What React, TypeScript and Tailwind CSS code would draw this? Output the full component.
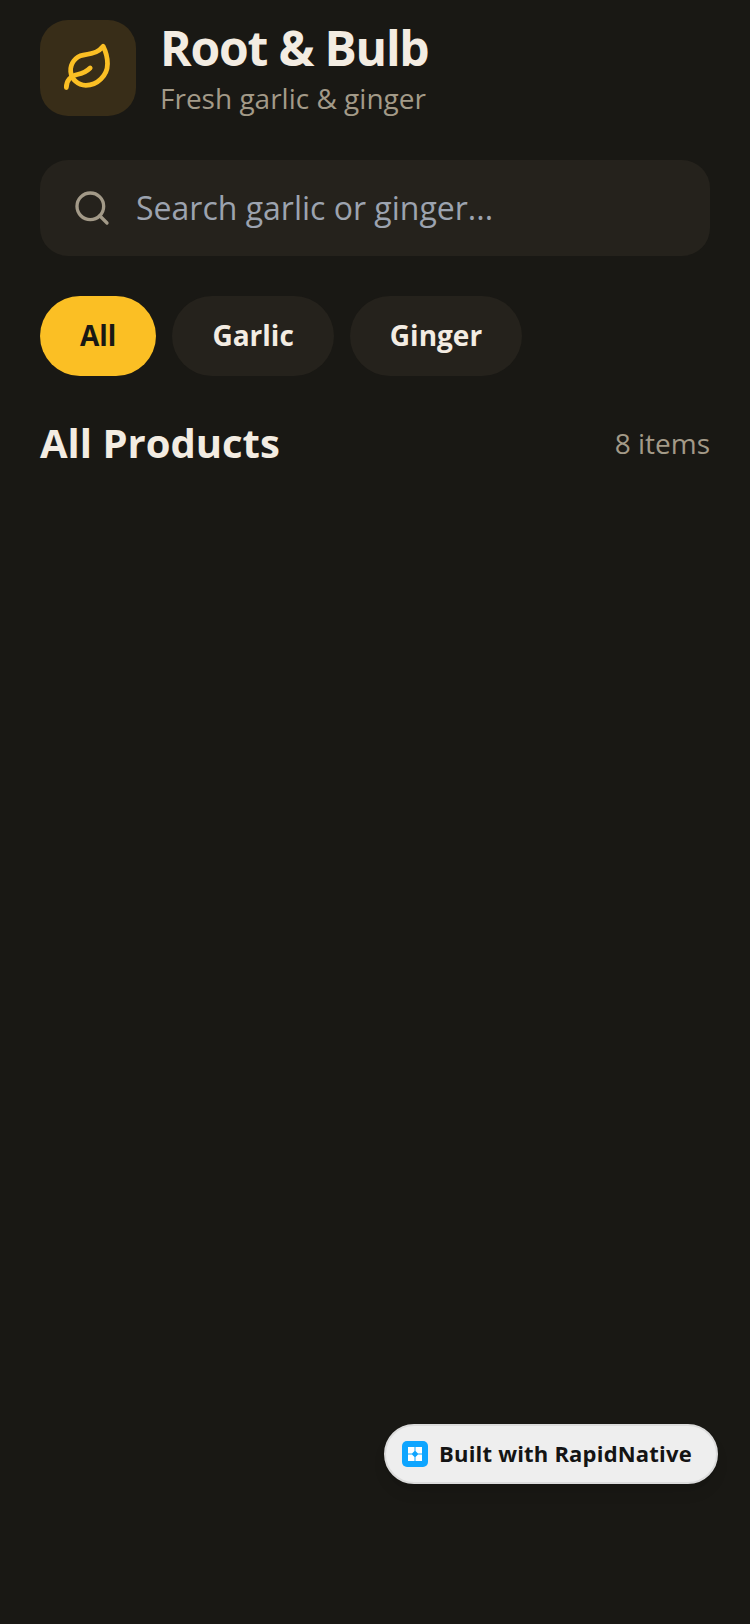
import { Leaf, Search } from "lucide-react";

const tabs = ["All", "Garlic", "Ginger"];

export default function App() {
  return (
    <div className="relative h-[1624px] w-[750px] overflow-hidden bg-[#191814] px-10 pt-5 font-['Open_Sans',sans-serif]">
      <header className="flex h-24 items-center gap-6">
        <div className="flex h-24 w-24 items-center justify-center rounded-[28px] bg-[#382d18]">
          <Leaf size={52} strokeWidth={2.2} className="text-[#fbbf24]" />
        </div>
        <div className="flex flex-col">
          <h1 className="text-[48px] leading-[56px] font-bold tracking-tight text-[#f3ece2]">Root &amp; Bulb</h1>
          <p className="mt-[5px] text-[28px] leading-[35px] text-[#a39a88]">Fresh garlic &amp; ginger</p>
        </div>
      </header>

      <div className="mt-11 flex h-24 items-center gap-6 rounded-[28px] bg-[#25221c] px-8">
        <Search size={40} strokeWidth={2} className="text-[#a39a88]" />
        <input
          readOnly
          placeholder="Search garlic or ginger..."
          className="min-w-0 flex-1 bg-transparent text-[32px] text-[#e5e7eb] outline-none placeholder:text-[#9ca3af]"
        />
      </div>

      <div className="mt-10 flex gap-4">
        {tabs.map((tab, i) => (
          <button
            key={tab}
            className={
              i === 0
                ? "h-20 rounded-full bg-[#fbbf24] px-10 pb-[2px] text-[28px] font-bold text-[#191814]"
                : "h-20 rounded-full bg-[#25221c] px-10 pb-[2px] text-[28px] font-bold text-[#f3ece2]"
            }
          >
            {tab}
          </button>
        ))}
      </div>

      <div className="mt-[39px] flex items-center justify-between">
        <h2 className="text-[40px] leading-[56px] font-bold text-[#f3ece2]">All Products</h2>
        <span className="text-[28px] text-[#a39a88]">8 items</span>
      </div>

      <div className="absolute top-[1424px] left-[384px] flex h-[60px] w-[334px] items-center gap-[11px] rounded-full border-2 border-[#dcdcdc] bg-[#eeeeee] pl-[16px] shadow-lg">
        <svg width="26" height="26" viewBox="0 0 26 26" aria-hidden="true">
          <rect width="26" height="26" rx="5" fill="#0ea5ff" />
          <path d="M6 6h6.5v4l-2.5 2.5H6zM13.5 6H20v6.5h-4L13.5 10zM6 13.5h4l2.5 2.5v4H6zM16 13.5h4V20h-6.5v-4z" fill="#ffffff" />
        </svg>
        <span className="whitespace-nowrap pb-[2px] text-[22px] font-bold tracking-[0.2px] text-[#141414]">Built with RapidNative</span>
      </div>
    </div>
  );
}
